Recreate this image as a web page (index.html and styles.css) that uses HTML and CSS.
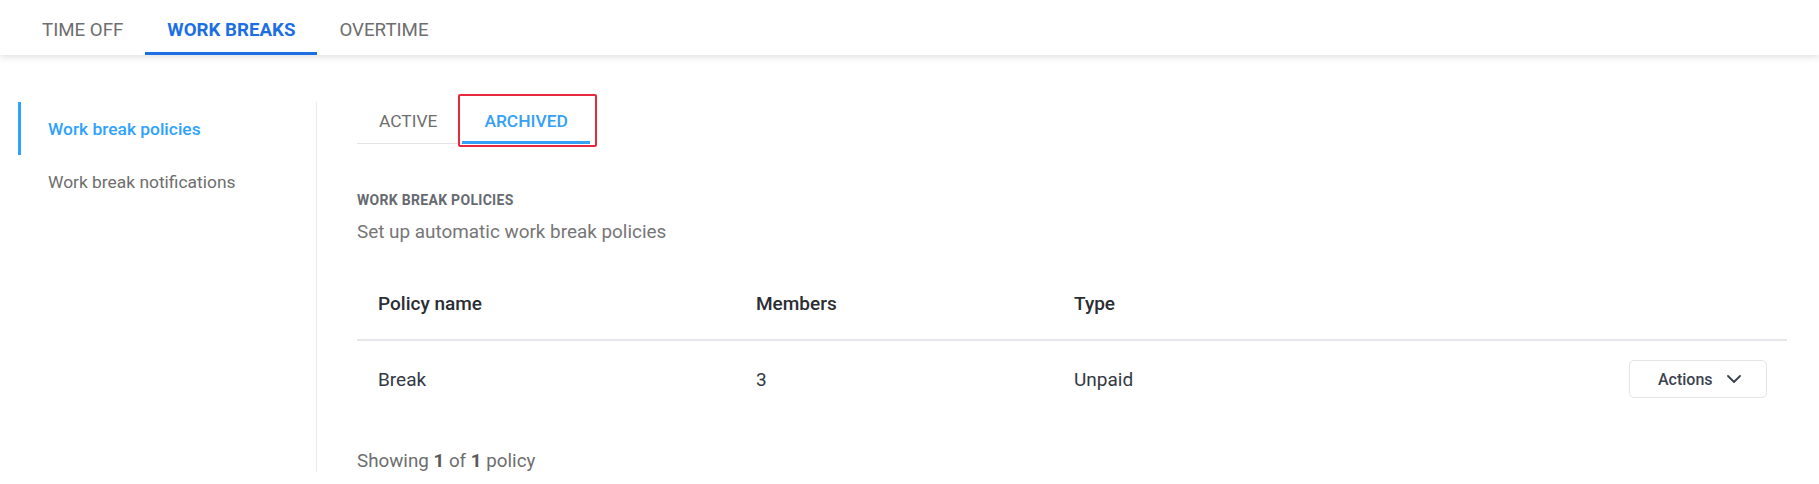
FILE: index.html
```html
<!DOCTYPE html>
<html lang="en">
<head>
<meta charset="utf-8">
<title>Work breaks</title>
<link rel="stylesheet" href="styles.css">
</head>
<body>
  <header class="topbar">
    <nav class="toptabs">
      <a class="toptab">TIME OFF</a>
      <a class="toptab is-active">WORK BREAKS</a>
      <a class="toptab">OVERTIME</a>
    </nav>
  </header>

  <div class="layout">
    <aside class="sidebar">
      <a class="side-item is-active">Work break policies</a>
      <a class="side-item">Work break notifications</a>
    </aside>

    <main class="content">
      <div class="subtabs">
        <a class="subtab">ACTIVE</a>
        <a class="subtab is-active is-marked">ARCHIVED</a>
      </div>

      <section class="intro">
        <h2 class="section-label">WORK BREAK POLICIES</h2>
        <p class="section-desc">Set up automatic work break policies</p>
      </section>

      <div class="table">
        <div class="row head">
          <div class="cell">Policy name</div>
          <div class="cell">Members</div>
          <div class="cell">Type</div>
          <div class="cell"></div>
        </div>
        <div class="row body">
          <div class="cell">Break</div>
          <div class="cell">3</div>
          <div class="cell">Unpaid</div>
          <div class="cell cell-actions">
            <button class="actions-btn" type="button">
              <span>Actions</span>
              <svg class="chev" width="14" height="8" viewBox="0 0 14 8" aria-hidden="true">
                <polyline points="1,1 7,7 13,1" fill="none" stroke="currentColor" stroke-width="1.8" stroke-linecap="round" stroke-linejoin="round"/>
              </svg>
            </button>
          </div>
        </div>
      </div>

      <p class="pager">Showing <b>1</b> of <b>1</b> policy</p>
    </main>
  </div>
</body>
</html>
```

FILE: styles.css
```css
* { box-sizing: border-box; }

html, body {
  margin: 0;
  padding: 0;
  background: #ffffff;
}

body {
  font-family: Roboto, "Liberation Sans", Arial, sans-serif;
  color: #333333;
  width: 1819px;
  height: 484px;
  overflow: hidden;
}

a { text-decoration: none; cursor: pointer; }

/* top navigation */
.topbar {
  height: 55px;
  background: #ffffff;
  box-shadow: 0 2px 7px rgba(0, 0, 0, 0.13);
  position: relative;
  z-index: 1;
}

.toptabs {
  display: flex;
  padding-left: 20px;
}

.toptab {
  display: block;
  font-size: 18.7px;
  line-height: 21px;
  padding: 20px 22px 11px;
  border-bottom: 3px solid transparent;
  color: #6e6e6e;
}

.toptab.is-active {
  color: #1b6fe3;
  font-weight: 700;
  border-bottom-color: #1b6fe3;
}

/* page body */
.layout {
  display: flex;
  margin-top: 47px;
}

.sidebar {
  width: 317px;
  flex: none;
  padding-left: 18px;
  border-right: 1px solid #ebebeb;
  min-height: 340px;
  display: flex;
  flex-direction: column;
}

.side-item {
  display: flex;
  align-items: center;
  height: 53px;
  padding-left: 27px;
  border-left: 3.5px solid transparent;
  font-size: 17.4px;
  color: #6e6e6e;
}

.side-item.is-active {
  border-left-color: #2ea2ff;
  color: #2ea2ff;
  font-weight: 500;
}

.content {
  flex: 1;
  padding: 0 32px 0 40px;
}

/* archived / active switch */
.subtabs {
  display: inline-flex;
  gap: 3px;
  box-shadow: inset 0 -1px 0 #e4e4e8;
}

.subtab {
  display: block;
  position: relative;
  font-size: 17.4px;
  line-height: 21px;
  padding: 9px 22px 9px;
  border-bottom: 3px solid transparent;
  color: #6e6e6e;
}

.subtab.is-active {
  color: #34a1f7;
  font-weight: 500;
  border-bottom-color: #34a1f7;
}

.subtab.is-marked::after {
  content: "";
  position: absolute;
  left: -4px;
  right: -7px;
  top: -8px;
  bottom: -6px;
  border: 2px solid #e8283d;
  border-radius: 2px;
}

/* heading */
.intro { margin-top: 49px; }

.section-label {
  margin: 0;
  font-size: 14px;
  line-height: 15px;
  font-weight: 700;
  color: #666a70;
  letter-spacing: 0.3px;
}

.section-desc {
  margin: 13px 0 0;
  font-size: 18.9px;
  line-height: 21px;
  color: #767676;
}

/* policy table */
.table { margin-top: 26px; }

.row {
  display: grid;
  grid-template-columns: 378px 318px 1fr auto;
  align-items: center;
}

.row.head {
  height: 73px;
  border-bottom: 2px solid #e6e7eb;
  font-weight: 500;
  color: #2a2d33;
  padding-bottom: 1px;
}

.row.body {
  height: 76px;
  color: #333842;
}

.cell {
  font-size: 19px;
  line-height: 21px;
  padding-left: 21px;
}

.cell-actions {
  padding-left: 0;
  padding-right: 20px;
}

.actions-btn {
  display: flex;
  align-items: center;
  gap: 14px;
  width: 138px;
  height: 38px;
  padding: 0 28px;
  background: #ffffff;
  border: 1px solid #e4e5e8;
  border-radius: 5px;
  font-family: inherit;
  font-size: 16px;
  font-weight: 500;
  color: #3c4350;
  cursor: pointer;
}

.chev { flex: none; }

.pager {
  margin: 34px 0 0;
  font-size: 18.8px;
  line-height: 21px;
  color: #6e6e6e;
}

.pager b {
  font-weight: 700;
  color: #5a5a5a;
}
```
